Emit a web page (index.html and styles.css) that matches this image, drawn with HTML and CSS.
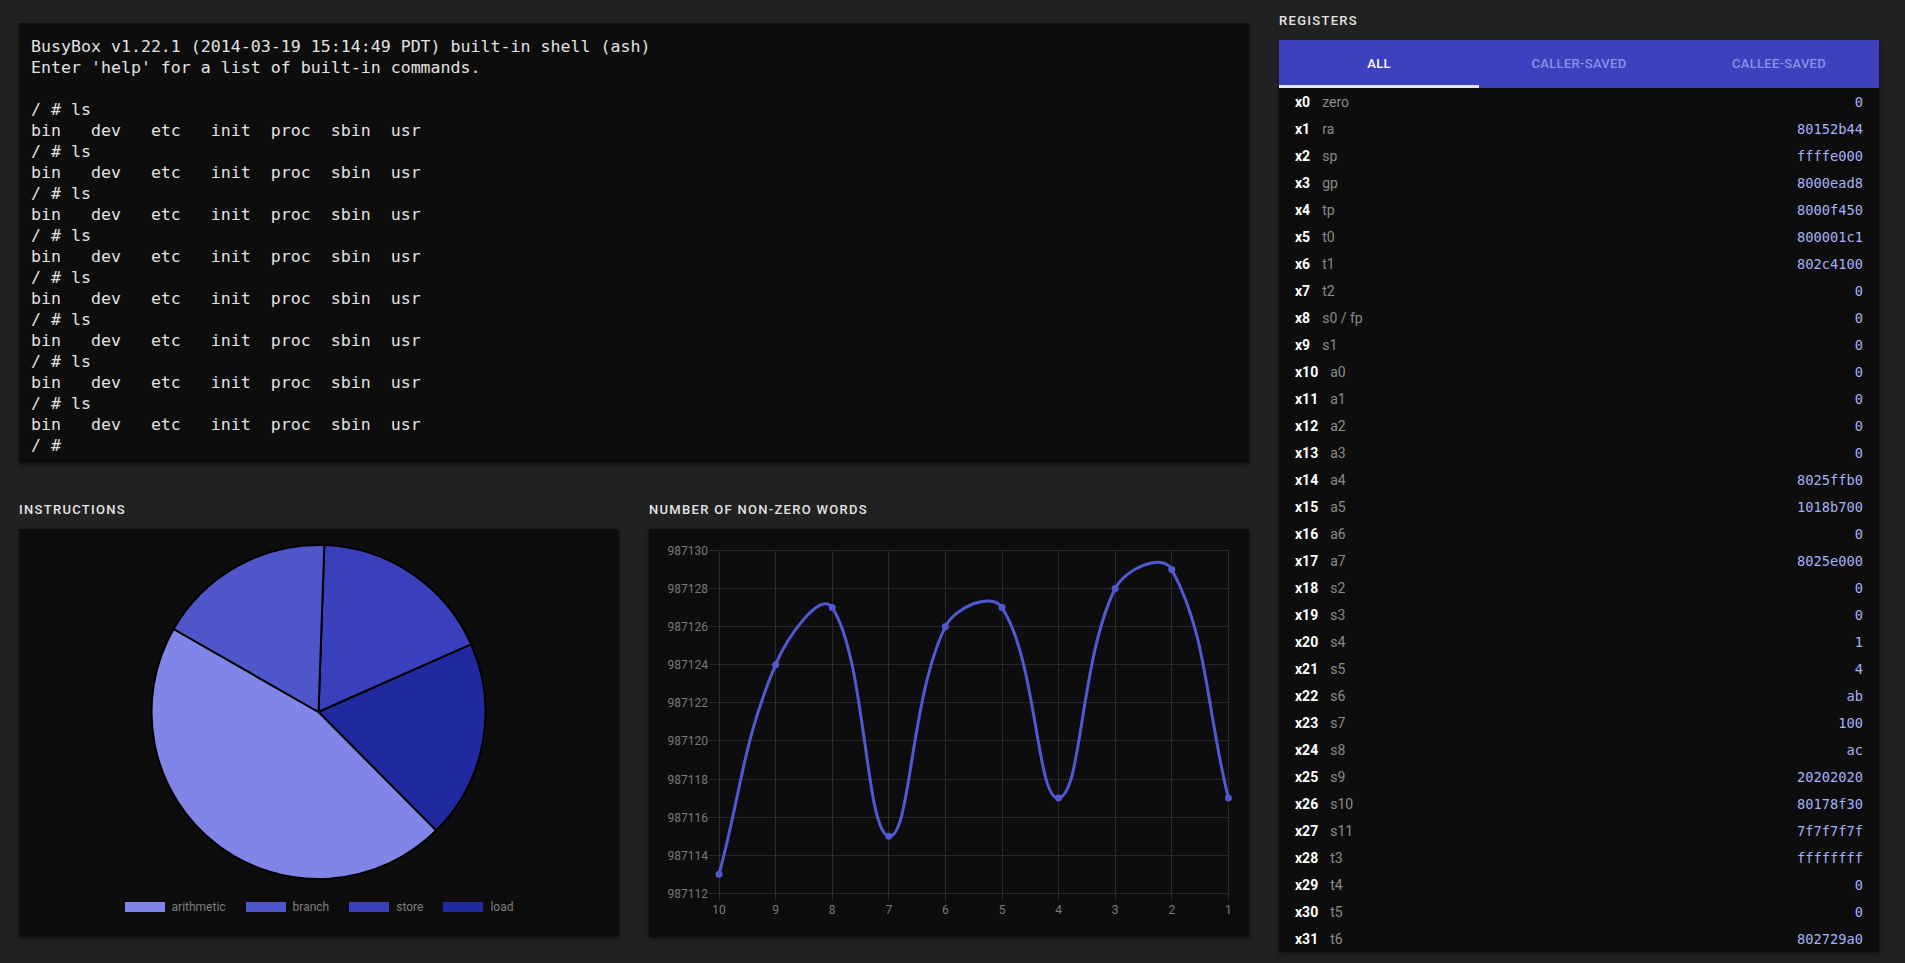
FILE: index.html
```html
<!DOCTYPE html>
<html lang="en">
<head>
<meta charset="utf-8">
<title>Emulator dashboard</title>
<link rel="stylesheet" href="styles.css">
</head>
<body>
<div class="page">
  <div class="main">
<pre class="terminal">BusyBox v1.22.1 (2014-03-19 15:14:49 PDT) built-in shell (ash)
Enter 'help' for a list of built-in commands.

/ # ls
bin   dev   etc   init  proc  sbin  usr
/ # ls
bin   dev   etc   init  proc  sbin  usr
/ # ls
bin   dev   etc   init  proc  sbin  usr
/ # ls
bin   dev   etc   init  proc  sbin  usr
/ # ls
bin   dev   etc   init  proc  sbin  usr
/ # ls
bin   dev   etc   init  proc  sbin  usr
/ # ls
bin   dev   etc   init  proc  sbin  usr
/ # ls
bin   dev   etc   init  proc  sbin  usr
/ # </pre>
    <div class="charts">
      <section class="panel">
        <h2 class="label">Instructions</h2>
        <div class="card pie-card">
          <svg class="pie" width="600" height="366" viewBox="0 0 600 366">
            <g stroke="#000" stroke-width="2" stroke-linejoin="round">
              <path fill="#3a40bb" d="M299.5,183 L305.33,16.1 A167,167 0 0 1 452.19,115.35 Z"/>
              <path fill="#2129a0" d="M299.5,183 L452.19,115.35 A167,167 0 0 1 417.17,301.5 Z"/>
              <path fill="#8185e7" d="M299.5,183 L417.17,301.5 A167,167 0 0 1 154.58,100 Z"/>
              <path fill="#4f56ca" d="M299.5,183 L154.58,100 A167,167 0 0 1 305.33,16.1 Z"/>
            </g>
          </svg>
          <div class="legend">
            <div class="legend-item"><span class="swatch sw-arith"></span>arithmetic</div>
            <div class="legend-item"><span class="swatch sw-branch"></span>branch</div>
            <div class="legend-item"><span class="swatch sw-store"></span>store</div>
            <div class="legend-item"><span class="swatch sw-load"></span>load</div>
          </div>
        </div>
      </section>
      <section class="panel">
        <h2 class="label">Number of non-zero words</h2>
        <div class="card line-card">
          <svg class="line-chart" width="600" height="408" viewBox="0 0 600 408">
            <g class="grid" stroke="#292929" stroke-width="1">
              <line x1="60" y1="21.5" x2="579.4" y2="21.5"/>
              <line x1="60" y1="59.5" x2="579.4" y2="59.5"/>
              <line x1="60" y1="97.5" x2="579.4" y2="97.5"/>
              <line x1="60" y1="135.5" x2="579.4" y2="135.5"/>
              <line x1="60" y1="173.5" x2="579.4" y2="173.5"/>
              <line x1="60" y1="211.5" x2="579.4" y2="211.5"/>
              <line x1="60" y1="250.5" x2="579.4" y2="250.5"/>
              <line x1="60" y1="288.5" x2="579.4" y2="288.5"/>
              <line x1="60" y1="326.5" x2="579.4" y2="326.5"/>
              <line x1="60" y1="364.5" x2="579.4" y2="364.5"/>
              <line x1="70.5" y1="21.5" x2="70.5" y2="372"/>
              <line x1="126.5" y1="21.5" x2="126.5" y2="372"/>
              <line x1="183.5" y1="21.5" x2="183.5" y2="372"/>
              <line x1="239.5" y1="21.5" x2="239.5" y2="372"/>
              <line x1="296.5" y1="21.5" x2="296.5" y2="372"/>
              <line x1="353.5" y1="21.5" x2="353.5" y2="372"/>
              <line x1="409.5" y1="21.5" x2="409.5" y2="372"/>
              <line x1="466.5" y1="21.5" x2="466.5" y2="372"/>
              <line x1="522.5" y1="21.5" x2="522.5" y2="372"/>
              <line x1="579.5" y1="21.5" x2="579.5" y2="372"/>
            </g>
            <g class="axis-y" text-anchor="end">
              <text x="59" y="25.5">987130</text>
              <text x="59" y="63.5">987128</text>
              <text x="59" y="101.5">987126</text>
              <text x="59" y="139.5">987124</text>
              <text x="59" y="177.5">987122</text>
              <text x="59" y="215.5">987120</text>
              <text x="59" y="254.5">987118</text>
              <text x="59" y="292.5">987116</text>
              <text x="59" y="330.5">987114</text>
              <text x="59" y="368.5">987112</text>
            </g>
            <g class="axis-x" text-anchor="middle">
              <text x="70" y="385">10</text>
              <text x="126.6" y="385">9</text>
              <text x="183.2" y="385">8</text>
              <text x="239.8" y="385">7</text>
              <text x="296.4" y="385">6</text>
              <text x="353" y="385">5</text>
              <text x="409.6" y="385">4</text>
              <text x="466.2" y="385">3</text>
              <text x="522.8" y="385">2</text>
              <text x="579.4" y="385">1</text>
            </g>
            <path class="series" d="M70,345.25 C92.64,261.43 93.56,213.54 126.6,135.7 C138.84,106.85 171.67,61.09 183.2,78.55 C216.95,129.67 216.24,303.18 239.8,307.15 C261.52,310.8 260.89,169.31 296.4,97.6 C306.17,77.87 342.54,62.7 353,78.55 C387.82,131.28 387.96,272.69 409.6,269.05 C433.24,265.07 430.69,131.21 466.2,59.5 C475.97,39.77 513.64,23.49 522.8,40.45 C558.92,107.31 556.76,177.61 579.4,269.05"/>
            <g class="points">
              <circle cx="70" cy="345.25" r="3.5"/>
              <circle cx="126.6" cy="135.7" r="3.5"/>
              <circle cx="183.2" cy="78.55" r="3.5"/>
              <circle cx="239.8" cy="307.15" r="3.5"/>
              <circle cx="296.4" cy="97.6" r="3.5"/>
              <circle cx="353" cy="78.55" r="3.5"/>
              <circle cx="409.6" cy="269.05" r="3.5"/>
              <circle cx="466.2" cy="59.5" r="3.5"/>
              <circle cx="522.8" cy="40.45" r="3.5"/>
              <circle cx="579.4" cy="269.05" r="3.5"/>
            </g>
          </svg>
        </div>
      </section>
    </div>
  </div>
  <aside class="registers">
    <h2 class="label">Registers</h2>
    <div class="reg-card">
      <div class="tabs">
        <div class="tab active">ALL</div>
        <div class="tab">CALLER-SAVED</div>
        <div class="tab">CALLEE-SAVED</div>
      </div>
      <div class="reg-list">
        <div class="reg"><span class="reg-name">x0</span><span class="reg-alias">zero</span><span class="reg-val">0</span></div>
        <div class="reg"><span class="reg-name">x1</span><span class="reg-alias">ra</span><span class="reg-val">80152b44</span></div>
        <div class="reg"><span class="reg-name">x2</span><span class="reg-alias">sp</span><span class="reg-val">ffffe000</span></div>
        <div class="reg"><span class="reg-name">x3</span><span class="reg-alias">gp</span><span class="reg-val">8000ead8</span></div>
        <div class="reg"><span class="reg-name">x4</span><span class="reg-alias">tp</span><span class="reg-val">8000f450</span></div>
        <div class="reg"><span class="reg-name">x5</span><span class="reg-alias">t0</span><span class="reg-val">800001c1</span></div>
        <div class="reg"><span class="reg-name">x6</span><span class="reg-alias">t1</span><span class="reg-val">802c4100</span></div>
        <div class="reg"><span class="reg-name">x7</span><span class="reg-alias">t2</span><span class="reg-val">0</span></div>
        <div class="reg"><span class="reg-name">x8</span><span class="reg-alias">s0 / fp</span><span class="reg-val">0</span></div>
        <div class="reg"><span class="reg-name">x9</span><span class="reg-alias">s1</span><span class="reg-val">0</span></div>
        <div class="reg"><span class="reg-name">x10</span><span class="reg-alias">a0</span><span class="reg-val">0</span></div>
        <div class="reg"><span class="reg-name">x11</span><span class="reg-alias">a1</span><span class="reg-val">0</span></div>
        <div class="reg"><span class="reg-name">x12</span><span class="reg-alias">a2</span><span class="reg-val">0</span></div>
        <div class="reg"><span class="reg-name">x13</span><span class="reg-alias">a3</span><span class="reg-val">0</span></div>
        <div class="reg"><span class="reg-name">x14</span><span class="reg-alias">a4</span><span class="reg-val">8025ffb0</span></div>
        <div class="reg"><span class="reg-name">x15</span><span class="reg-alias">a5</span><span class="reg-val">1018b700</span></div>
        <div class="reg"><span class="reg-name">x16</span><span class="reg-alias">a6</span><span class="reg-val">0</span></div>
        <div class="reg"><span class="reg-name">x17</span><span class="reg-alias">a7</span><span class="reg-val">8025e000</span></div>
        <div class="reg"><span class="reg-name">x18</span><span class="reg-alias">s2</span><span class="reg-val">0</span></div>
        <div class="reg"><span class="reg-name">x19</span><span class="reg-alias">s3</span><span class="reg-val">0</span></div>
        <div class="reg"><span class="reg-name">x20</span><span class="reg-alias">s4</span><span class="reg-val">1</span></div>
        <div class="reg"><span class="reg-name">x21</span><span class="reg-alias">s5</span><span class="reg-val">4</span></div>
        <div class="reg"><span class="reg-name">x22</span><span class="reg-alias">s6</span><span class="reg-val">ab</span></div>
        <div class="reg"><span class="reg-name">x23</span><span class="reg-alias">s7</span><span class="reg-val">100</span></div>
        <div class="reg"><span class="reg-name">x24</span><span class="reg-alias">s8</span><span class="reg-val">ac</span></div>
        <div class="reg"><span class="reg-name">x25</span><span class="reg-alias">s9</span><span class="reg-val">20202020</span></div>
        <div class="reg"><span class="reg-name">x26</span><span class="reg-alias">s10</span><span class="reg-val">80178f30</span></div>
        <div class="reg"><span class="reg-name">x27</span><span class="reg-alias">s11</span><span class="reg-val">7f7f7f7f</span></div>
        <div class="reg"><span class="reg-name">x28</span><span class="reg-alias">t3</span><span class="reg-val">ffffffff</span></div>
        <div class="reg"><span class="reg-name">x29</span><span class="reg-alias">t4</span><span class="reg-val">0</span></div>
        <div class="reg"><span class="reg-name">x30</span><span class="reg-alias">t5</span><span class="reg-val">0</span></div>
        <div class="reg"><span class="reg-name">x31</span><span class="reg-alias">t6</span><span class="reg-val">802729a0</span></div>
      </div>
    </div>
  </aside>
</div>
</body>
</html>
```

FILE: styles.css
```css
* { box-sizing: border-box; }

html, body {
  margin: 0;
  background: #212121;
  font-family: Roboto, "Noto Sans", sans-serif;
  color: #e0e0e0;
}

.page {
  display: grid;
  grid-template-columns: 1230px 600px;
  column-gap: 30px;
  padding: 12px 0 0 19px;
  height: 963px;
  overflow: hidden;
}

.main {
  padding-top: 11px;
}

.terminal {
  margin: 0;
  height: 440px;
  padding: 13px 12px 7px;
  background: #0d0d0d;
  color: #e2e2e2;
  font-family: "DejaVu Sans Mono", "Liberation Mono", monospace;
  font-size: 16.6px;
  line-height: 21px;
  white-space: pre;
  overflow: hidden;
  box-shadow: 0 2px 4px rgba(0, 0, 0, 0.45);
}

.charts {
  display: grid;
  grid-template-columns: 600px 600px;
  column-gap: 30px;
  margin-top: 38px;
}

.label {
  margin: 0 0 10px;
  height: 18px;
  font-size: 13px;
  line-height: 18px;
  font-weight: 500;
  letter-spacing: 1.3px;
  text-transform: uppercase;
  color: #e4e4e4;
}

.card {
  height: 408px;
  background: #0d0d0d;
  box-shadow: 0 2px 4px rgba(0, 0, 0, 0.45);
}

.pie-card {
  display: flex;
  flex-direction: column;
}

.pie {
  display: block;
}

.legend {
  height: 24px;
  display: flex;
  justify-content: center;
  align-items: center;
  gap: 20px;
  font-size: 12px;
  color: #7d7d7d;
}

.legend-item {
  display: flex;
  align-items: center;
  gap: 7px;
}

.swatch {
  display: block;
  width: 40px;
  height: 10px;
}

.sw-arith { background: #8185e7; }
.sw-branch { background: #4f56ca; }
.sw-store { background: #3a40bb; }
.sw-load { background: #2129a0; }

.line-chart {
  display: block;
}

.line-chart text {
  font-family: Roboto, sans-serif;
  font-size: 12px;
  fill: #7a7a7a;
}

.series {
  fill: none;
  stroke: #5159d1;
  stroke-width: 3;
}

.points circle {
  fill: #5159d1;
}

.reg-card {
  width: 600px;
  background: #0d0d0d;
  box-shadow: 0 2px 4px rgba(0, 0, 0, 0.45);
}

.tabs {
  display: grid;
  grid-template-columns: repeat(3, 1fr);
  height: 48px;
  background: #3c41bd;
}

.tab {
  display: flex;
  align-items: center;
  justify-content: center;
  padding-bottom: 2px;
  font-size: 13px;
  font-weight: 500;
  letter-spacing: 0.3px;
  color: #8a91e5;
}

.tab.active {
  color: #ffffff;
  box-shadow: inset 0 -3px 0 #e6e7f7;
}

.reg {
  display: flex;
  align-items: center;
  height: 27px;
  padding: 0 16px;
  font-size: 14px;
}

.reg-name {
  font-weight: 700;
  color: #ffffff;
  margin-right: 12px;
}

.reg-alias {
  color: #8a8a8a;
}

.reg-val {
  margin-left: auto;
  font-family: "DejaVu Sans Mono", "Liberation Mono", monospace;
  font-size: 13.7px;
  color: #a7b1f6;
}
```
